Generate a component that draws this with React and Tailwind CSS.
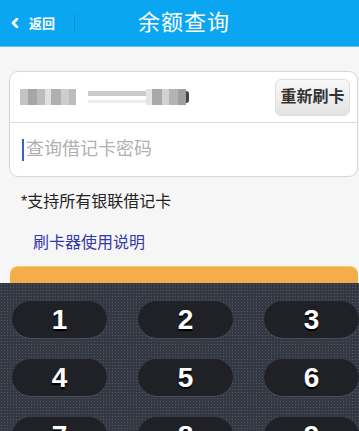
import React from 'react';

const KEYS = ['1', '2', '3', '4', '5', '6', '7', '8', '9'];

// pixelated card number
const BLUR_LEFT = [
    ['#c4c4c4', 8], ['#a6a6a6', 9], ['#bcbcbc', 8], ['#e0e0e0', 6], ['#b0b0b0', 10], ['#cdcdcd', 8], ['#bdbdbd', 7],
];
const BLUR_RIGHT = [
    ['#e4e4e4', 6], ['#a8a8a8', 10], ['#d2d2d2', 7], ['#b4b4b4', 9], ['#9f9f9f', 8],
];

const App = () => {
    return (
        <div className="relative w-[359px] h-[431px] overflow-hidden bg-[#f6f6f6]" style={{ fontFamily: '"Liberation Sans", "Noto Sans CJK SC", sans-serif' }}>
            {/* header */}
            <div className="h-[47px] bg-[#0aa6f2] border-b border-[#5cc4f6] flex items-center relative">
                <div className="flex items-center pl-[11px] w-[74px] text-white">
                    <svg width="8" height="10" viewBox="0 0 8 10" className="mr-[10px]">
                        <path d="M6 1 L2 5 L6 9" stroke="white" strokeWidth="2.6" fill="none" strokeLinecap="round" strokeLinejoin="round" />
                    </svg>
                    <span className="text-[13px] leading-none font-bold">返回</span>
                </div>
                <div className="w-px h-[18px] bg-[#0b92d6]" />
                <div className="absolute left-[138px] top-[10px] text-[22px] leading-[26px] text-white tracking-[1px]">余额查询</div>
            </div>

            {/* form */}
            <div className="pl-[9px] pr-px pt-[24px]">
                <div className="bg-white border border-[#d6d6d6] rounded-[9px]">
                    <div className="h-[51px] flex items-center justify-between pl-[10px] pr-[7px] border-b border-[#dcdcdc]">
                        <div className="flex items-center h-[19px]">
                            {BLUR_LEFT.map(([c, w], i) => (
                                <div key={i} className="h-[16px]" style={{ background: c, width: w }} />
                            ))}
                            <div className="w-[12px]" />
                            <div className="flex flex-col gap-[4px] w-[58px]">
                                <div className="h-[5px] bg-[#cbcbcb]" />
                                <div className="h-[3px] bg-[#ececec]" />
                            </div>
                            {BLUR_RIGHT.map(([c, w], i) => (
                                <div key={i} className="h-[16px]" style={{ background: c, width: w }} />
                            ))}
                            <div className="w-[3px] h-[12px] bg-[#444] rounded-r-full" />
                        </div>
                        <div className="w-[75px] h-[37px] rounded-[6px] border border-[#dedede] bg-gradient-to-b from-[#f9f9f9] to-[#e3e3e3] flex items-center justify-center text-[16px] text-[#333] font-bold">
                            重新刷卡
                        </div>
                    </div>
                    <div className="h-[53px] flex items-center pl-[12px]">
                        <div className="w-[2px] h-[22px] bg-[#3d5fd0] mr-[2px]" />
                        <span className="text-[18px] text-[#b0b0b0]">查询借记卡密码</span>
                    </div>
                </div>

                <p className="mt-[14px] pl-[12px] text-[16px] leading-[22px] text-[#222]">*支持所有银联借记卡</p>
                <p className="mt-[19px] pl-[24px] text-[16px] leading-[22px] text-[#3737ad]">刷卡器使用说明</p>

                <div className="mt-[12px] ml-px h-[44px] rounded-[8px] bg-[#f3ad4a] border-t border-[#f7c77a]" />
            </div>

            {/* keypad overlay */}
            <div className="absolute left-0 right-0 top-[283px] bottom-0 bg-[#343842] bg-[radial-gradient(#50555f_0.8px,transparent_0.9px)] bg-[length:3px_3px] pt-[17px] pl-[12px]">
                <div className="grid grid-cols-[95px_95px_95px] gap-x-[31px] gap-y-[20px]">
                    {KEYS.map(k => (
                        <div key={k} className="h-[38px] rounded-[19px] bg-[#1f2127] border-t border-[#3a3d45] shadow-[0_1px_0_#4a4e58] flex items-center justify-center">
                            <span className="text-[28px] font-bold text-white leading-none [text-shadow:0_2px_1px_#000]">{k}</span>
                        </div>
                    ))}
                </div>
            </div>
        </div>
    );
};

export default App;
